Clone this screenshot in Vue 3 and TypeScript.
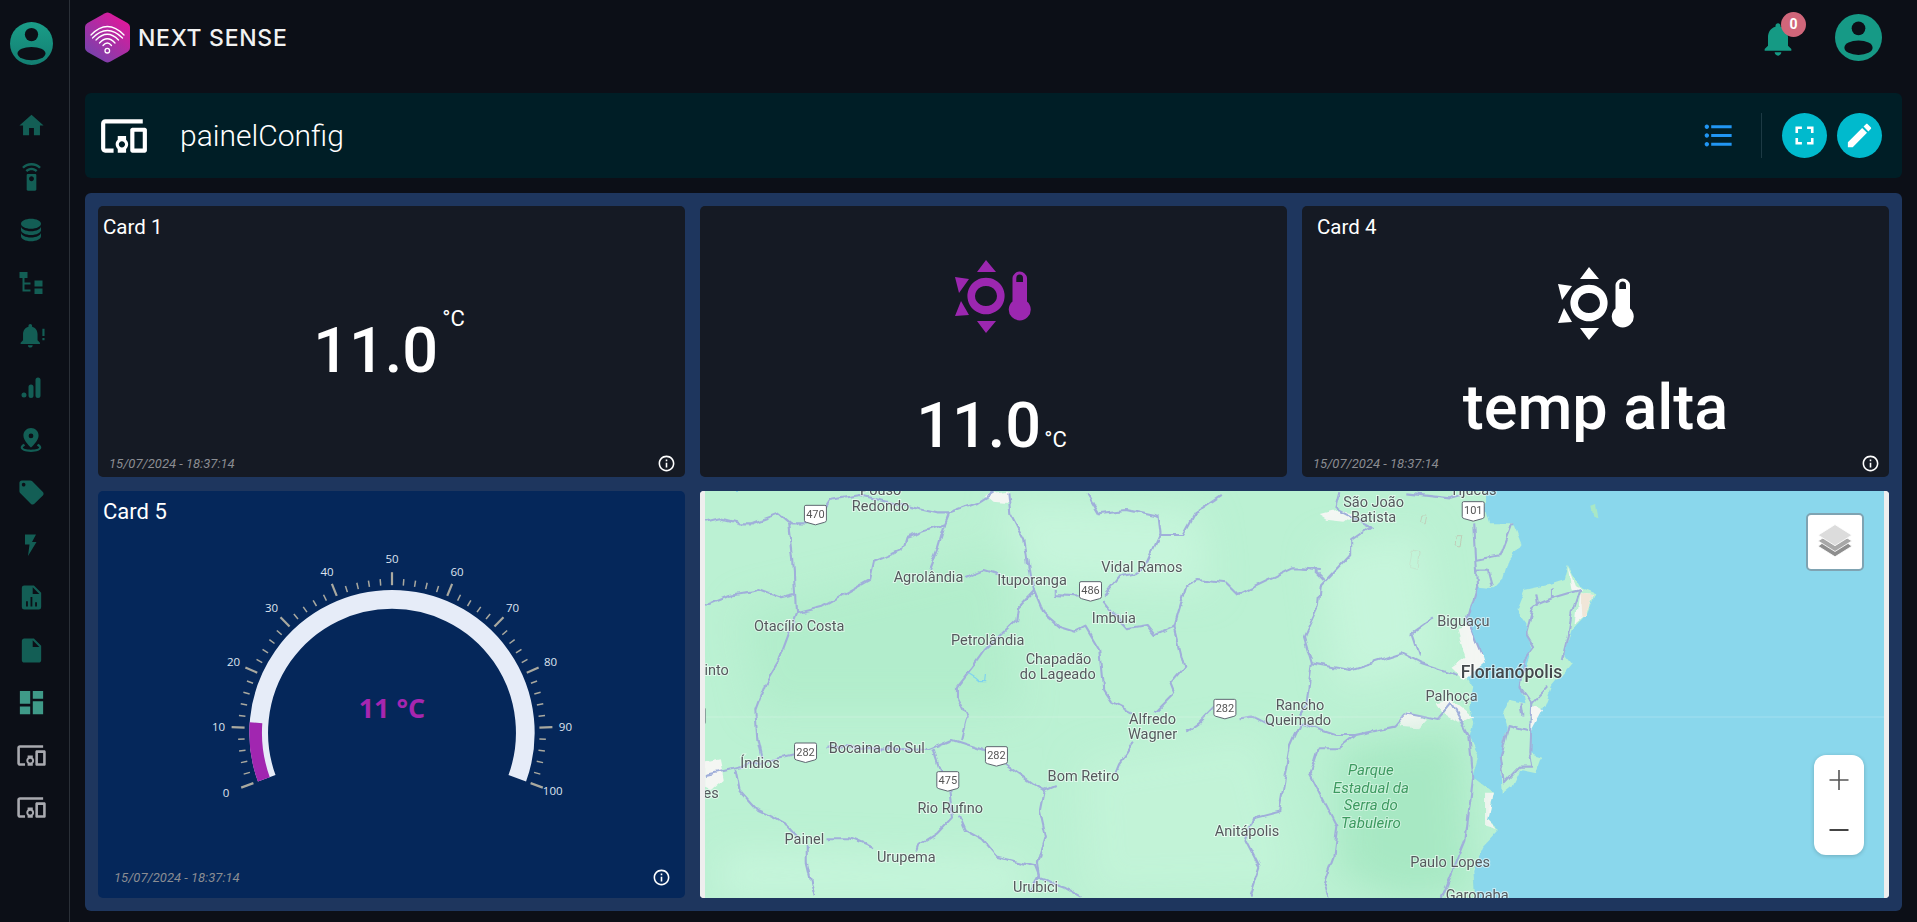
<script setup lang="ts">
interface NavIcon {
  d: string
  size: number
  kind?: string
}

const ICONS = {
  devices:
    'M3 6h18V4H3c-1.1 0-2 .9-2 2v12c0 1.1.9 2 2 2h4v-2H3V6zm10 6H9v1.78c-.61.55-1 1.33-1 2.22s.39 1.67 1 2.22V20h4v-1.78c.61-.55 1-1.34 1-2.22s-.39-1.67-1-2.22V12zm-2 5.5c-.83 0-1.5-.67-1.5-1.5s.67-1.5 1.5-1.5 1.5.67 1.5 1.5-.67 1.5-1.5 1.5zM22 8h-6c-.5 0-1 .5-1 1v10c0 .5.5 1 1 1h6c.5 0 1-.5 1-1V9c0-.5-.5-1-1-1zm-1 10h-4v-8h4v8z',
  bell:
    'M12 22c1.1 0 2-.9 2-2h-4c0 1.1.9 2 2 2zm6-6v-5c0-3.07-1.63-5.64-4.5-6.32V4c0-.83-.67-1.5-1.5-1.5s-1.5.67-1.5 1.5v.68C7.64 5.36 6 7.92 6 11v5l-2 2v1h16v-1l-2-2z',
  info:
    'M11 7h2v2h-2zm0 4h2v6h-2zm1-9C6.48 2 2 6.48 2 12s4.48 10 10 10 10-4.48 10-10S17.52 2 12 2zm0 18c-4.41 0-8-3.59-8-8s3.59-8 8-8 8 3.59 8 8-3.59 8-8 8z',
  list:
    'M4 10.5c-.83 0-1.5.67-1.5 1.5s.67 1.5 1.5 1.5 1.5-.67 1.5-1.5-.67-1.5-1.5-1.5zm0-6c-.83 0-1.5.67-1.5 1.5S3.17 7.5 4 7.5 5.5 6.83 5.5 6 4.83 4.5 4 4.5zm0 12c-.83 0-1.5.68-1.5 1.5s.68 1.5 1.5 1.5 1.5-.68 1.5-1.5-.67-1.5-1.5-1.5zM7 19h14v-2H7v2zm0-6h14v-2H7v2zm0-8v2h14V5H7z',
  fullscreen: 'M7 14H5v5h5v-2H7v-3zm-2-4h2V7h3V5H5v5zm12 7h-3v2h5v-5h-2v3zM14 5v2h3v3h2V5h-5z',
  edit:
    'M3 17.25V21h3.75L17.81 9.94l-3.75-3.75L3 17.25zM20.71 7.04c.39-.39.39-1.02 0-1.41l-2.34-2.34c-.39-.39-1.02-.39-1.41 0l-1.83 1.83 3.75 3.75 1.83-1.83z',
}

const navItems: NavIcon[] = [
  { d: 'M10 20v-6h4v6h5v-8h3L12 3 2 12h3v8z', size: 29 },
  {
    d: 'M15 9H9c-.55 0-1 .45-1 1v12c0 .55.45 1 1 1h6c.55 0 1-.45 1-1V10c0-.55-.45-1-1-1zm-3 6c-1.1 0-2-.9-2-2s.9-2 2-2 2 .9 2 2-.9 2-2 2zM7.05 6.05l1.41 1.41C9.37 6.56 10.62 6 12 6s2.63.56 3.54 1.46l1.41-1.41C15.68 4.78 13.93 4 12 4s-3.68.78-4.95 2.05zM12 0C8.96 0 6.21 1.23 4.22 3.22l1.41 1.41C7.26 3.01 9.51 2 12 2s4.74 1.01 6.36 2.64l1.41-1.41C17.79 1.23 15.04 0 12 0z',
    size: 29,
  },
  {
    d: 'M12,3C7.58,3 4,4.79 4,7C4,9.21 7.58,11 12,11C16.42,11 20,9.21 20,7C20,4.79 16.42,3 12,3M4,9V12C4,14.21 7.58,16 12,16C16.42,16 20,14.21 20,12V9C20,11.21 16.42,13 12,13C7.58,13 4,11.21 4,9M4,14V17C4,19.21 7.58,21 12,21C16.42,21 20,19.21 20,17V14C20,16.21 16.42,18 12,18C7.58,18 4,16.21 4,14Z',
    size: 30,
  },
  { d: 'M0.5 1h8v6h-8zM3.5 7h2v4.5h6v2h-6v5h6v2h-8zM15.5 9.500h8v6h-8zM15.500 17.500h8v5.500h-8z', size: 24 },
  {
    d: 'M11 22c1.1 0 2-.9 2-2H9c0 1.100.9 2 2 2zm6-6v-5c0-3.070-1.630-5.640-4.500-6.320V4c0-.83-.67-1.500-1.500-1.500S9.500 3.170 9.500 4v.68C6.640 5.360 5 7.920 5 11v5l-2 2v1h16v-1l-2-2zM21 6.500h1.800v6H21zM21 14h1.800v2H21z',
    size: 29,
  },
  {
    d: 'M2.500 19a2.500 2.500 0 1 1 5 0 2.500 2.500 0 0 1-5 0zM9.500 11a2.500 2.500 0 0 1 5 0v8.500a2.500 2.500 0 0 1-5 0zM16.500 4a2.500 2.500 0 0 1 5 0v15.500a2.500 2.500 0 0 1-5 0z',
    size: 24,
  },
  {
    d: 'M12 1c-3.900 0-7 3.100-7 7 0 4.500 7 11 7 11s7-6.500 7-11c0-3.900-3.100-7-7-7zm0 5a2.200 2.200 0 1 1 0 4.400A2.200 2.200 0 0 1 12 6zM5.500 15.500C3.500 16.500 2.500 17.600 2.500 19c0 2.500 4.200 4 9.500 4s9.500-1.500 9.500-4c0-1.400-1-2.500-3-3.500l-1 1.700c1.300.6 2 1.200 2 1.800 0 1-3 2-7.500 2s-7.500-1-7.500-2c0-.6.7-1.200 2-1.800z',
    size: 26,
  },
  {
    d: 'M21.410 11.580l-9-9C12.050 2.220 11.550 2 11 2H4c-1.100 0-2 .9-2 2v7c0 .55.22 1.050.59 1.420l9 9c.36.36.86.58 1.410.58s1.050-.22 1.410-.59l7-7c.37-.36.59-.86.59-1.410s-.23-1.060-.59-1.420zM5.500 7C4.670 7 4 6.330 4 5.500S4.670 4 5.500 4 7 4.670 7 5.500 6.330 7 5.500 7z',
    size: 29,
  },
  { d: 'M6 1.500h11l-4 7.500h4.500L9 23l1.500-11.500H6z', size: 24 },
  {
    d: 'M14 2H6a2 2 0 0 0-2 2v16a2 2 0 0 0 2 2h12a2 2 0 0 0 2-2V8zM7.500 19.500v-4.500H9v4.500zM11.200 19.500v-8h1.500v8zM15 19.500v-3.500h1.500v3.500zM13 9V3.500L18.500 9z',
    size: 29,
  },
  { d: 'M14 2H6c-1.100 0-1.990.9-1.990 2L4 20c0 1.100.89 2 1.990 2H18c1.100 0 2-.9 2-2V8l-6-6zm-1 7V3.500L18.500 9H13z', size: 29 },
  { d: 'M3 13h8V3H3v10zm0 8h8v-6H3v6zm10 0h8V11h-8v10zm0-18v6h8V3h-8z', size: 31, kind: 'active' },
  { d: ICONS.devices, size: 31, kind: 'muted' },
  { d: ICONS.devices, size: 31, kind: 'muted' },
]

// gauge
const CX = 240
const CY = 200.7
const gaugeValue = 11
const angleOf = (v: number) => 200 - v * 2.2
const polar = (r: number, v: number) => {
  const a = (angleOf(v) * Math.PI) / 180
  return { x: CX + r * Math.cos(a), y: CY - r * Math.sin(a) }
}
const arc = (r: number, from: number, to: number) => {
  const s = polar(r, from)
  const e = polar(r, to)
  const large = (to - from) * 2.2 > 180 ? 1 : 0
  return `M${s.x} ${s.y}A${r} ${r} 0 ${large} 1 ${e.x} ${e.y}`
}
const ticks = Array.from({ length: 51 }, (_, i) => {
  const v = i * 2
  const major = v % 10 === 0
  const a = polar(147.5, v)
  const b = polar(major ? 160.5 : 154, v)
  return { v, major, x1: a.x, y1: a.y, x2: b.x, y2: b.y }
})
const tickLabels = Array.from({ length: 11 }, (_, i) => {
  const v = i * 10
  const p = polar(v === 0 ? 176.5 : v === 100 ? 171 : 173.5, v)
  return { v, x: p.x, y: p.y }
})

// map, coordinates were read off two crops of the reference
const toA = (zx: number, zy: number) => ({ x: zx / 2.53, y: zy / 3 - 1 })
const toB = (zx: number, zy: number) => ({ x: 600 + zx / 2.54, y: zy / 3 - 1 })

const roadsA = [
  'M13 95L50 85 100 100 130 100 200 70 230 100 290 100 330 30 400 15 530 50 600 70 630 70 700 40 740 10',
  'M225 100L235 200 240 300 243 370 225 430 200 510 165 580 140 660 145 750 155 800',
  'M13 345L75 315 150 300 205 325 240 315',
  'M243 370L310 350 370 310 430 270 440 215 510 180 520 140 620 100 630 70',
  'M620 100L600 180 580 240',
  'M670 265L720 240 760 255',
  'M780 10L785 70 820 150 835 260 845 300 805 350 800 390 720 480 690 530 650 590 650 620 675 680 660 750',
  'M845 300L870 370 910 410 950 425 975 410 1010 480 1020 600 1040 635 1090 665',
  'M900 300L900 315 960 320',
  'M1020 320L1060 260 1100 250',
  'M1020 330L1050 375 1080 415 1130 405 1150 435 1200 410 1230 290 1260 270 1330 280 1360 315 1500 235 1568 240',
  'M1200 410L1225 530 1190 580 1200 610 1150 670',
  'M980 10L1010 70 1080 60 1160 80 1165 130 1130 220 1100 250',
  'M1160 135L1220 135 1250 70 1320 15',
  'M1230 725L1260 700 1300 650',
  'M1365 685L1400 680 1440 705',
  'M1100 755L1060 820 1050 850',
  'M15 855L90 835 240 795',
  'M90 840L100 900 145 960 190 985 220 1005 250 1045',
  'M320 1045L380 1045 440 1075',
  'M270 1070L270 1120 290 1220',
  'M320 770L580 780 640 750 720 780 780 830 840 880 870 900 900 885',
  'M870 900L860 960 875 1040 855 1120 860 1165 920 1190 965 1220',
  'M590 780L610 850',
  'M630 900L640 980 600 1030 555 1065 550 1085',
  'M655 980L670 1020 715 1050 750 1100 850 1130 860 1160 835 1210',
  'M1520 700L1495 765 1465 965 1400 985 1380 1050 1415 1130 1390 1220',
]
const roadsB = [
  'M100 10L90 55 180 110 130 150 130 190 50 290 45 350 10 440 30 520 15 650 0 680',
  'M0 235L35 240 60 270',
  'M30 520L125 540 260 490 310 520 400 555',
  'M285 430L340 385',
  'M285 430L305 500',
  'M270 10L380 25 410 15',
  'M440 100L445 210 450 290 425 390 460 490',
  'M445 210L510 195 540 100',
  'M445 245L480 245 490 290',
  'M385 640L350 690 270 670 240 710 140 735 90 735 0 700',
  'M385 640L430 740 440 860 420 1050 360 1224',
  'M140 735L100 775 45 775 25 850 95 1010 85 1100 60 1180 70 1224',
  'M590 360L610 340 640 325 710 300 690 370 680 440 665 510',
  'M600 310L605 350',
  'M640 295L640 325',
  'M590 360L575 430 595 470 570 510 560 590 590 640 630 590',
  'M590 640L585 790 590 830 560 830 520 880 510 800 530 705 580 720',
  'M560 640L565 680',
]
const landPath =
  'M470 0L470 60 480 100 540 100 560 160 530 210 515 270 495 295 450 290 430 360 430 420 460 490 465 515 425 560 440 590 430 650 440 700 430 740 455 800 440 860 490 905 475 990 505 1020 465 1070 440 1140 445 1230L-1600 1230-1600 0Z'
const islandPath =
  'M680 225L710 290 750 310 730 370 690 420 670 490 690 520 640 590 610 680 590 720 585 790 615 800 600 850 560 840 540 890 515 915 510 800 525 710 515 670 530 630 570 640 560 570 580 510 590 470 575 430 575 400 550 360 570 300 630 285 670 270Z'
const urbanPaths = [
  'M400 420L430 410 465 500 470 520 420 570 385 530 420 500Z',
  'M345 640L385 630 440 680 410 700 360 665Z',
  'M250 690L275 665 320 690 300 715 255 710Z',
  'M50 75L100 60 140 70 110 95 70 90Z',
  'M680 230L700 290 720 300 690 300Z',
  'M710 310L745 315 725 375 700 400Z',
  'M590 650L620 660 590 725Z',
  'M470 905L490 905 475 990 500 1020 470 1010Z',
]
const urbanPathsA = ['M720 15L780 5 785 40 740 35Z', 'M13 815L50 805 60 870 30 900 13 890Z']

const placesA: [string, number, number][] = [
  ['Pouso', 457, 0],
  ['Redondo', 457, 48],
  ['Agrolândia', 578, 262],
  ['Ituporanga', 840, 270],
  ['Vidal Ramos', 1118, 232],
  ['Imbuia', 1047, 385],
  ['Otacílio Costa', 251, 408],
  ['Petrolândia', 728, 450],
  ['Chapadão', 907, 506],
  ['do Lageado', 905, 551],
  ['into', 42, 540],
  ['Alfredo', 1145, 686],
  ['Wagner', 1145, 731],
  ['Bocaina do Sul', 447, 775],
  ['Índios', 152, 820],
  ['Bom Retiro', 970, 858],
  ['Rio Rufino', 633, 955],
  ['Painel', 264, 1048],
  ['Urupema', 522, 1102],
  ['Urubici', 849, 1190],
  ['Anitápolis', 1384, 1022],
  ['es', 28, 908],
]
const placesB: [string, number, number][] = [
  ['Tijucas', 440, 0],
  ['São João', 187, 37],
  ['Batista', 187, 82],
  ['Biguaçu', 415, 393],
  ['Palhoça', 385, 618],
  ['Paulo Lopes', 381, 1117],
  ['Garopaba', 450, 1215],
  ['Rancho', 0, 645],
  ['Queimado', -5, 690],
]
const places = [
  ...placesA.map(([name, x, y]) => ({ name, ...toA(x, y) })),
  ...placesB.map(([name, x, y]) => ({ name, ...toB(x, y) })),
]
const park = ['Parque', 'Estadual da', 'Serra do', 'Tabuleiro'].map((name, i) => ({
  name,
  ...toB(180, 840 + i * 52.500),
}))
const florianopolis = toB(537, 547)
const shields = [
  { n: '470', ...toA(292, 73) },
  { n: '486', ...toA(988, 302) },
  { n: '282', ...toA(1328, 655) },
  { n: '282', ...toA(267, 786) },
  { n: '282', ...toA(750, 797) },
  { n: '475', ...toA(627, 872) },
  { n: '282', ...toA(-15, 680) },
  { n: '101', ...toB(440, 62) },
]
</script>

<template>
  <div class="app">
    <aside class="sidebar">
      <svg class="side-avatar" viewBox="0 0 24 24">
        <defs>
          <linearGradient id="tealFill" x1="0" y1="0" x2="0" y2="1">
            <stop offset="0" stop-color="#1a9d88" />
            <stop offset="1" stop-color="#137f72" />
          </linearGradient>
        </defs>
        <circle cx="12" cy="12" r="12" fill="url(#tealFill)" />
        <circle cx="12" cy="7" r="3.700" fill="#0c0f17" />
        <ellipse cx="12" cy="17.600" rx="7.800" ry="3.700" fill="#0c0f17" />
      </svg>
      <div v-for="(item, i) in navItems" :key="i" class="nav-cell">
        <svg :class="['nav-icon', item.kind]" :width="item.size" :height="item.size" viewBox="0 0 24 24">
          <path :d="item.d" fill-rule="evenodd" />
        </svg>
      </div>
    </aside>

    <main class="main">
      <header class="topbar">
        <div class="brand">
          <svg class="logo" viewBox="0 0 45 51" width="45" height="51">
            <defs>
              <linearGradient id="hexFill" x1="0.85" y1="0.05" x2="0.15" y2="0.95">
                <stop offset="0" stop-color="#e3179b" />
                <stop offset="1" stop-color="#7443ad" />
              </linearGradient>
            </defs>
            <path
              d="M20 1.200Q22.500 0 25 1.200L42.500 11Q45 12.500 45 15V36Q45 38.500 42.500 40L25 49.800Q22.500 51 20 49.800L2.500 40Q0 38.500 0 36V15Q0 12.500 2.500 11Z"
              fill="url(#hexFill)"
            />
            <g fill="none" stroke="#fff" stroke-width="1.300" stroke-linecap="round">
              <path d="M6 23Q22.300 6 39 23" />
              <path d="M7.500 26Q22.300 11 37.500 26" />
              <path d="M11 28Q22.300 16.500 33.500 28" />
              <path d="M14.500 31Q22.300 22.500 30 31" />
              <path d="M18 33.500Q22.300 28.500 26.500 33.500" />
              <circle cx="22.300" cy="38.700" r="2.300" />
            </g>
          </svg>
          <span class="brand-name">NEXT SENSE</span>
        </div>
        <div class="top-actions">
          <div class="bell-wrap">
            <svg viewBox="0 0 24 24" width="40" height="40"><path :d="ICONS.bell" fill="#159a84" /></svg>
            <span class="badge">0</span>
          </div>
          <svg class="user-avatar" viewBox="0 0 24 24">
            <circle cx="12" cy="12" r="12" fill="#169a86" />
            <circle cx="12" cy="7.300" r="3.500" fill="#0c0f17" />
            <ellipse cx="12" cy="17.200" rx="7.200" ry="3.700" fill="#0c0f17" />
          </svg>
        </div>
      </header>

      <section class="title-bar">
        <svg class="title-icon" viewBox="0 0 24 24" width="50" height="50"><path :d="ICONS.devices" fill="#fff" /></svg>
        <h1 class="title">painelConfig</h1>
        <svg class="list-icon" viewBox="0 0 24 24" width="35" height="35"><path :d="ICONS.list" fill="#2196f3" /></svg>
        <span class="divider"></span>
        <button class="round-btn">
          <svg viewBox="0 0 24 24" width="31" height="31"><path :d="ICONS.fullscreen" fill="#fff" /></svg>
        </button>
        <button class="round-btn">
          <svg viewBox="0 0 24 24" width="31" height="31"><path :d="ICONS.edit" fill="#fff" /></svg>
        </button>
      </section>

      <section class="panel">
        <article class="card">
          <div class="card-title">Card 1</div>
          <div class="card-body">
            <span class="value">11.0</span>
            <span class="unit-sup">°C</span>
          </div>
          <footer class="card-foot">
            <span class="stamp">15/07/2024 - 18:37:14</span>
            <svg viewBox="0 0 24 24" width="19" height="19"><path :d="ICONS.info" fill="#fff" /></svg>
          </footer>
        </article>

        <article class="card card-icon">
          <svg class="sun" viewBox="0 0 76 73" width="76" height="73" fill="#9c27b0">
            <path d="M31 0L22 12H41ZM22 61H41L31 73ZM0 17L14 19 4 33ZM6 41L14 55 0 56Z" />
            <path
              fill-rule="evenodd"
              d="M31 17.700a18.600 18.300 0 1 0 .01 0zM31 26a11 10 0 1 1-.01 0z"
            />
            <path
              fill-rule="evenodd"
              d="M57.500 18a7.300 7.300 0 0 1 14.500 0V41.500A11 10.800 0 1 1 57.500 41.500zM61.300 22H68V18a3.350 3.600 0 0 0-6.700 0z"
            />
          </svg>
          <div class="value-row">
            <span class="value">11.0</span>
            <span class="unit">°C</span>
          </div>
        </article>

        <article class="card">
          <div class="card-title title-wide">Card 4</div>
          <div class="card-stack">
            <svg class="sun" viewBox="0 0 76 73" width="76" height="73" fill="#fff">
              <path d="M31 0L22 12H41ZM22 61H41L31 73ZM0 17L14 19 4 33ZM6 41L14 55 0 56Z" />
              <path
                fill-rule="evenodd"
                d="M31 17.700a18.600 18.300 0 1 0 .01 0zM31 26a11 10 0 1 1-.01 0z"
              />
              <path
                fill-rule="evenodd"
                d="M57.500 18a7.300 7.300 0 0 1 14.500 0V41.500A11 10.800 0 1 1 57.500 41.500zM61.300 22H68V18a3.350 3.600 0 0 0-6.700 0z"
              />
            </svg>
            <div class="alert-text">temp alta</div>
          </div>
          <footer class="card-foot">
            <span class="stamp">15/07/2024 - 18:37:14</span>
            <svg viewBox="0 0 24 24" width="19" height="19"><path :d="ICONS.info" fill="#fff" /></svg>
          </footer>
        </article>

        <article class="card card-gauge">
          <div class="card-title">Card 5</div>
          <div class="gauge-body">
            <svg class="gauge" viewBox="0 0 480 310" width="480" height="310">
              <path :d="arc(133.300, 0, 100)" fill="none" stroke="#e6ecf8" stroke-width="18.700" />
              <path :d="arc(136.400, 0, gaugeValue)" fill="none" stroke="#a126b0" stroke-width="12.700" />
              <line
                v-for="t in ticks"
                :key="t.v"
                :x1="t.x1"
                :y1="t.y1"
                :x2="t.x2"
                :y2="t.y2"
                stroke="#aaa99f"
                :stroke-width="t.major ? 2.200 : 1.500"
              />
              <text
                v-for="l in tickLabels"
                :key="l.v"
                class="gauge-label"
                :x="l.x"
                :y="l.y + 4"
                text-anchor="middle"
              >{{ l.v }}</text>
              <text class="gauge-value" :x="CX" y="186" text-anchor="middle">11 °C</text>
            </svg>
          </div>
          <footer class="card-foot foot-wide">
            <span class="stamp">15/07/2024 - 18:37:14</span>
            <svg viewBox="0 0 24 24" width="19" height="19"><path :d="ICONS.info" fill="#fff" /></svg>
          </footer>
        </article>

        <article class="map">
          <svg class="map-canvas" viewBox="0 0 1189 407" width="1189" height="407">
            <defs>
              <filter id="wiggle" filterUnits="userSpaceOnUse" x="0" y="0" width="1189" height="407">
                <feTurbulence type="fractalNoise" baseFrequency="0.07" numOctaves="2" seed="4" />
                <feDisplacementMap in="SourceGraphic" scale="7" xChannelSelector="R" yChannelSelector="G" />
              </filter>
              <filter id="soft" filterUnits="userSpaceOnUse" x="-100" y="-100" width="1400" height="600">
                <feGaussianBlur stdDeviation="18" />
              </filter>
            </defs>
            <rect width="1189" height="407" fill="#8ad7ec" />
            <g filter="url(#wiggle)">
              <g transform="translate(600,-1) scale(0.3937,0.3333)">
                <path :d="landPath" fill="#bbf1d3" />
                <path :d="islandPath" fill="#bbf1d3" />
                <path d="M740 50L752 45 758 85 745 80Z" fill="#a9e8c5" />
                <path v-for="(d, i) in urbanPaths" :key="i" :d="d" fill="#f4f6f3" />
                <path d="M710 310L745 315 725 375 715 380Z" fill="#f0e6d8" />
                <path d="M285 180L305 185 300 235 278 230Z M310 75L322 75 318 105 306 100Z M396 140L414 140 408 168 394 165Z" fill="none" stroke="#c0cdb8" stroke-width="1" vector-effect="non-scaling-stroke" />
              </g>
            </g>
            <clipPath id="landClip">
              <path :d="landPath" transform="translate(600,-1) scale(0.3937,0.3333)" />
            </clipPath>
            <g clip-path="url(#landClip)">
              <g filter="url(#soft)">
                <path d="M640 260L760 240 770 400 700 407 640 380Z" fill="#a2e6bf" opacity="0.8" />
                <path d="M40 120L300 60 320 220 60 220Z" fill="#aeebc9" opacity="0.7" />
                <path d="M300 10L500 20 510 100 330 90Z" fill="#c9f6dd" opacity="0.8" />
                <path d="M20 360L330 370 320 407 20 407Z" fill="#c9f6dd" opacity="0.8" />
                <path d="M380 270L560 240 600 400 390 407Z" fill="#c6f5db" opacity="0.6" />
                <path d="M620 60L720 40 740 170 640 200Z" fill="#c9f6dd" opacity="0.8" />
              </g>
            </g>
            <g filter="url(#wiggle)">
              <g transform="translate(600,-1) scale(0.3937,0.3333)">
                <path v-for="(d, i) in roadsB" :key="i" class="road" :d="d" />
              </g>
              <g transform="translate(0,-1) scale(0.3953,0.3333)">
                <path v-for="(d, i) in urbanPathsA" :key="i" :d="d" fill="#f4f6f3" />
                <path v-for="(d, i) in roadsA" :key="i" class="road" :d="d" />
                <path d="M680 548L698 562 708 572 720 572 722 552" fill="none" stroke="#7fd3ee" stroke-width="1.200" vector-effect="non-scaling-stroke" />
              </g>
            </g>
            <line x1="5" y1="226" x2="1184" y2="226" stroke="#fff" stroke-opacity="0.22" />
            <g v-for="(s, i) in shields" :key="i">
              <path
                :transform="`translate(${s.x - 12},${s.y - 10})`"
                d="M2.500 1H21.500Q23 1 23 2.500V16Q23 17.500 21 18L12 20.500 3 18Q1 17.500 1 16V2.500Q1 1 2.500 1Z"
                fill="#fff"
                stroke="#5e6570"
                stroke-width="1"
              />
              <text class="shield-text" :x="s.x" :y="s.y + 3.500" text-anchor="middle">{{ s.n }}</text>
            </g>
            <text
              v-for="p in places"
              :key="p.name"
              class="place"
              :x="p.x"
              :y="p.y + 5"
              text-anchor="middle"
            >{{ p.name }}</text>
            <text
              v-for="p in park"
              :key="p.name"
              class="park"
              :x="p.x"
              :y="p.y + 5"
              text-anchor="middle"
            >{{ p.name }}</text>
            <text class="capital" :x="florianopolis.x" :y="florianopolis.y + 6" text-anchor="middle">Florianópolis</text>
            <rect x="0" width="5" height="407" fill="#eee" />
            <rect x="1184" width="5" height="407" fill="#eee" />
          </svg>
          <button class="layers">
            <svg viewBox="0 0 36 36" width="38" height="38">
              <path d="M2 22L18 32 34 22 30 19H6Z" fill="#8e8e8e" stroke="#fff" stroke-width="0.800" />
              <path d="M2 17L18 27 34 17 30 14.500H6Z" fill="#a8a8a8" stroke="#fff" stroke-width="0.800" />
              <path d="M18 1.500L34 11.500 18 21.500 2 11.500Z" fill="#dcdcdc" stroke="#fff" stroke-width="0.800" />
            </svg>
          </button>
          <div class="zoom-box">
            <span class="zoom-btn">
              <svg viewBox="0 0 20 22" width="20" height="22"><path d="M9.200 1h1.600v20H9.200zM0.500 10.200h19v1.600h-19z" fill="#555" /></svg>
            </span>
            <span class="zoom-btn">
              <svg viewBox="0 0 20 4" width="20" height="4"><path d="M0.500 1h19v2h-19z" fill="#444" /></svg>
            </span>
          </div>
        </article>
      </section>
    </main>
  </div>
</template>

<style>
html,
body {
  background: #0c0f17;
  overflow: hidden;
}
</style>

<style scoped>
.app {
  display: flex;
  width: 100%;
  height: 922px;
  overflow: hidden;
  background: #0c0f17;
  font-family: Roboto, "Liberation Sans", sans-serif;
  color: #fff;
}

.sidebar {
  flex: 0 0 70px;
  box-sizing: border-box;
  border-right: 1px solid #2b3038;
  display: flex;
  flex-direction: column;
  align-items: center;
  padding-top: 22px;
}
.side-avatar {
  width: 43px;
  height: 43px;
  margin: 0 7px 34px 0;
  flex: none;
}
.nav-cell {
  flex: 0 0 52.5px;
  width: 100%;
  display: flex;
  align-items: center;
  justify-content: center;
  padding-right: 7px;
  box-sizing: border-box;
}
.nav-icon {
  fill: #135e55;
}
.nav-icon.active {
  fill: #3f9a88;
}
.nav-icon.muted {
  fill: #a9aab0;
}

.main {
  flex: 1;
  min-width: 0;
  padding: 0 15px;
  display: flex;
  flex-direction: column;
}

.topbar {
  flex: 0 0 93px;
  display: flex;
  justify-content: space-between;
  align-items: flex-start;
}
.brand {
  display: flex;
  align-items: center;
  gap: 8px;
  margin-top: 12px;
}
.brand-name {
  font-family: Inter, sans-serif;
  font-weight: 500;
  font-size: 23px;
  letter-spacing: 0.7px;
  color: #f2f2f2;
}
.top-actions {
  display: flex;
  align-items: flex-start;
  margin-right: 20px;
}
.bell-wrap {
  position: relative;
  width: 40px;
  height: 40px;
  margin: 19px 37px 0 0;
}
.badge {
  position: absolute;
  left: 23px;
  top: -7px;
  width: 25px;
  height: 25px;
  border-radius: 50%;
  background: #d0667a;
  font-size: 14px;
  font-weight: 700;
  line-height: 25px;
  text-align: center;
}
.user-avatar {
  width: 47px;
  height: 47px;
  margin-top: 14px;
}

.title-bar {
  flex: 0 0 85px;
  box-sizing: border-box;
  display: flex;
  align-items: center;
  padding: 0 20px 0 14px;
  background: #001e26;
  border-radius: 6px;
}
.title {
  margin: 0 auto 0 31px;
  font-size: 30px;
  font-weight: 300;
}
.list-icon {
  margin-right: 25px;
}
.divider {
  width: 1px;
  height: 45px;
  margin-right: 20px;
  background: #1d3a44;
}
.round-btn {
  width: 45px;
  height: 45px;
  padding: 0;
  margin-left: 0;
  border: none;
  border-radius: 50%;
  background: #00bacd;
  display: flex;
  align-items: center;
  justify-content: center;
}
.round-btn + .round-btn {
  margin-left: 10px;
}

.panel {
  flex: 0 0 718px;
  box-sizing: border-box;
  margin-top: 15px;
  padding: 13px;
  background: #1e365e;
  border-radius: 6px;
  display: grid;
  grid-template-columns: repeat(3, 1fr);
  grid-template-rows: 271px 1fr;
  gap: 14px 15px;
}

.card {
  background: #151a24;
  border-radius: 5px;
  display: flex;
  flex-direction: column;
  min-width: 0;
}
.card-title {
  flex: 0 0 41px;
  box-sizing: border-box;
  padding: 9px 0 0 5px;
  font-size: 20.5px;
  line-height: 24px;
}
.title-wide {
  padding-left: 15px;
}
.card-body {
  flex: 1;
  display: flex;
  align-items: center;
  justify-content: center;
  padding: 5px 5px 0 0;
}
.value {
  font-size: 63px;
  line-height: 64px;
  font-weight: 500;
}
.unit-sup {
  font-size: 22px;
  line-height: 20px;
  margin: 0 0 64px 4px;
}
.card-foot {
  flex: 0 0 28px;
  box-sizing: border-box;
  display: flex;
  align-items: center;
  justify-content: space-between;
  padding: 0 9.5px 0 11px;
}
.stamp {
  font-size: 13px;
  font-style: italic;
  color: #8b8d92;
}

.card-icon {
  align-items: center;
  padding-top: 54px;
}
.card-icon .sun {
  margin-right: 2px;
}
.value-row {
  display: flex;
  align-items: baseline;
  margin: 61px 4px 0 0;
}
.unit {
  font-size: 22px;
  margin-left: 3px;
}
.card-stack {
  flex: 1;
  display: flex;
  flex-direction: column;
  align-items: center;
  padding-top: 20px;
}
.sun {
  flex: none;
}
.alert-text {
  margin-top: 36px;
  font-size: 63px;
  line-height: 63px;
  font-weight: 500;
}

.card-gauge {
  background: #05275a;
}
.card-gauge .card-title {
  font-size: 22px;
}
.gauge-body {
  flex: 1;
  display: flex;
  justify-content: center;
}
.gauge-label {
  font-family: "Open Sans", sans-serif;
  font-size: 11.5px;
  fill: #dfe4f0;
}
.gauge-value {
  font-family: "Open Sans", sans-serif;
  font-size: 27px;
  font-weight: 700;
  fill: #a626b0;
}
.foot-wide {
  flex-basis: 42px;
  padding: 0 14px 0 16px;
}

.map {
  grid-column: span 2;
  position: relative;
  overflow: hidden;
  border-radius: 4px;
  background: #eee;
}
.map-canvas {
  display: block;
  filter: blur(0.4px);
}
.road {
  fill: none;
  stroke: #a0afda;
  stroke-width: 2.1px;
  stroke-linejoin: round;
  vector-effect: non-scaling-stroke;
}
.place {
  font-size: 14.5px;
  fill: #55595d;
  stroke: rgba(255, 255, 255, 0.55);
  stroke-width: 2px;
  paint-order: stroke;
}
.park {
  font-size: 15px;
  font-style: italic;
  fill: #3d9a60;
  stroke: rgba(255, 255, 255, 0.4);
  stroke-width: 2px;
  paint-order: stroke;
}
.capital {
  font-size: 17.5px;
  font-weight: 500;
  fill: #44484c;
  stroke: rgba(255, 255, 255, 0.55);
  stroke-width: 2px;
  paint-order: stroke;
}
.shield-text {
  font-size: 11px;
  fill: #555;
}
.layers {
  position: absolute;
  left: 1106px;
  top: 22px;
  width: 58px;
  height: 58px;
  padding: 0;
  box-sizing: border-box;
  border: 2px solid #7fa3b2;
  border-radius: 5px;
  background: #fff;
  display: flex;
  align-items: center;
  justify-content: center;
}
.zoom-box {
  position: absolute;
  left: 1114px;
  top: 264px;
  width: 50px;
  height: 100px;
  border-radius: 12px;
  background: #fff;
  box-shadow: 0 1px 4px rgba(0, 0, 0, 0.2);
  display: flex;
  flex-direction: column;
}
.zoom-btn {
  flex: 1;
  display: flex;
  align-items: center;
  justify-content: center;
}
</style>
